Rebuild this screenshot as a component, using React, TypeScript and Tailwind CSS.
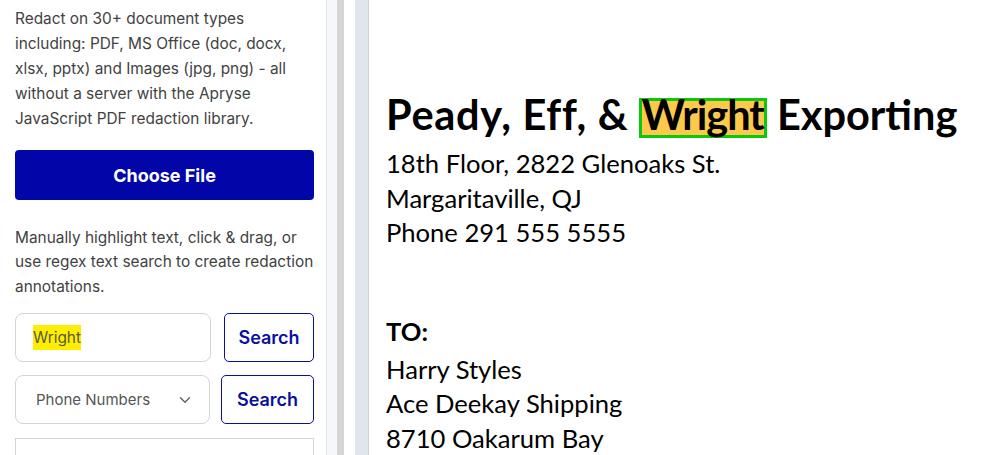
import { ChevronDown } from 'lucide-react'

export default function App() {
  return (
    <div className="flex h-[455px] w-[981px] overflow-hidden bg-white">
      {/* Sidebar */}
      <div className="w-[327px] shrink-0 border-r border-[#e3e5e8] pl-[15px] pr-[12px] pt-[5.5px] font-['Inter',sans-serif] text-[15.4px] leading-[25px] text-[#424242]">
        <p>
          Redact on 30+ document types including: PDF, MS Office (doc, docx, xlsx, pptx) and Images (jpg, png) - all
          without a server with the Apryse JavaScript PDF redaction library.
        </p>

        <button className="mt-[19.5px] h-[50px] w-full rounded-[4px] bg-[#0206a8] text-[18px] font-bold text-white">
          Choose File
        </button>

        <p className="mt-[25.75px] leading-[24.5px]">
          Manually highlight text, click &amp; drag, or use regex text search to create redaction annotations.
        </p>

        <div className="mt-[14px] flex gap-[13px]">
          <div className="flex h-[49px] w-[196px] items-center rounded-[8px] border border-[#d4d4d8] px-[17px]">
            <span className="bg-[#ffee00] text-[#5a5a3a]">Wright</span>
          </div>
          <button className="h-[49px] flex-1 rounded-[5px] border border-[#0a0fa0] text-[18px] font-semibold text-[#0a0fa0]">
            Search
          </button>
        </div>

        <div className="mt-[13px] flex gap-[11px]">
          <div className="flex h-[49px] w-[195px] items-center justify-between rounded-[8px] border border-[#d4d4d8] pl-[20px] pr-[15px] text-[15px] text-[#555]">
            <span>Phone Numbers</span>
            <ChevronDown size={18} strokeWidth={2} className="text-[#666]" />
          </div>
          <button className="h-[49px] flex-1 rounded-[5px] border border-[#0a0fa0] text-[18px] font-semibold text-[#0a0fa0]">
            Search
          </button>
        </div>

        <div className="mt-[14px] h-[60px] border border-[#d4d4d8]" />
      </div>

      {/* Scroll gutter */}
      <div className="w-[10px] shrink-0 bg-[#f5f7fa]" />
      <div className="w-[7px] shrink-0 bg-[#d6d6d6]" />
      <div className="w-[11px] shrink-0 bg-white" />
      <div className="w-[14px] shrink-0 border-r border-[#cdd2da] bg-[#e1e5ec]" />

      {/* Document page */}
      <div className="flex-1 pl-[17px] pt-[92px] font-['Lato',sans-serif] text-black">
        <h1 className="text-[41.5px] font-bold leading-[44px]">
          <span className="tracking-[0.7px]">Peady, Eff, &amp;</span>{' '}
          <span className="inline-block border-[3px] border-[#0cc80c] bg-[#fdc94c] pb-[8px] leading-[26px] tracking-[-1px]">
            Wright
          </span>{' '}
          Exporting
        </h1>
        <div className="mt-[8px] text-[25.6px] leading-[34.5px]">
          <p>18th Floor, 2822 Glenoaks St.</p>
          <p>Margaritaville, QJ</p>
          <p>Phone 291 555 5555</p>
        </div>
        <div className="mt-[60px] text-[25.6px] leading-[34.5px]">
          <p className="font-bold leading-[42px]">TO:</p>
          <p>Harry Styles</p>
          <p>Ace Deekay Shipping</p>
          <p>8710 Oakarum Bay</p>
        </div>
      </div>
    </div>
  )
}
